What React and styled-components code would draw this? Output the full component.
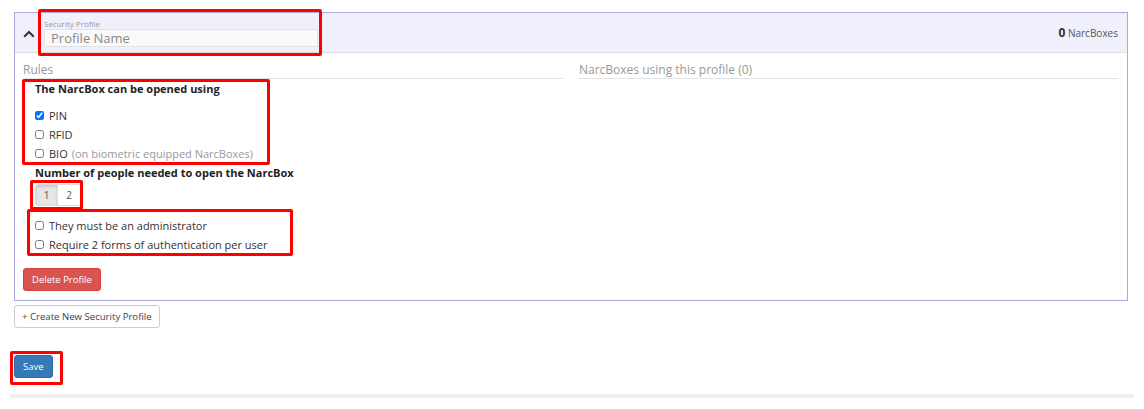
import React, { useState } from "react";
import styled, { createGlobalStyle } from "styled-components";

const GlobalStyle = createGlobalStyle`
    body{
        margin: 0;
        background: #FFFFFF;
        font-family: 'Open Sans', 'Liberation Sans', sans-serif;
        color: #333333;
    }
`;

export default function App() {
    const [people, setPeople] = useState(1);
    const [methods, setMethods] = useState({ pin: true, rfid: false, bio: false });

    return (
        <>
            <GlobalStyle />
            <Page>
                <Panel>
                    <PanelHeader>
                        <Chevron viewBox="0 0 12 8">
                            <path d="M1.2 6.8 L6 2 L10.8 6.8" fill="none" stroke="#333" strokeWidth="2" />
                        </Chevron>
                        <Field>
                            <small>Security Profile</small>
                            <input placeholder="Profile Name" />
                        </Field>
                        <Count><b>0</b> NarcBoxes</Count>
                    </PanelHeader>
                    <PanelBody>
                        <Column>
                            <ColumnTitle>Rules</ColumnTitle>
                            <Rules>
                                <RuleTitle>The NarcBox can be opened using</RuleTitle>
                                <CheckList top={8} bottom={1}>
                                    <Check>
                                        <input type="checkbox" checked={methods.pin} onChange={() => setMethods({ ...methods, pin: !methods.pin })} />
                                        PIN
                                    </Check>
                                    <Check>
                                        <input type="checkbox" checked={methods.rfid} onChange={() => setMethods({ ...methods, rfid: !methods.rfid })} />
                                        RFID
                                    </Check>
                                    <Check>
                                        <input type="checkbox" checked={methods.bio} onChange={() => setMethods({ ...methods, bio: !methods.bio })} />
                                        BIO <Muted>(on biometric equipped NarcBoxes)</Muted>
                                    </Check>
                                </CheckList>
                                <RuleTitle>Number of people needed to open the NarcBox</RuleTitle>
                                <ButtonGroup>
                                    <GroupButton active={people === 1} onClick={() => setPeople(1)}>1</GroupButton>
                                    <GroupButton active={people === 2} onClick={() => setPeople(2)}>2</GroupButton>
                                </ButtonGroup>
                                <CheckList top={10} bottom={0}>
                                    <Check><input type="checkbox" />They must be an administrator</Check>
                                    <Check><input type="checkbox" />Require 2 forms of authentication per user</Check>
                                </CheckList>
                            </Rules>
                            <DangerButton>Delete Profile</DangerButton>
                        </Column>
                        <Column>
                            <ColumnTitle>NarcBoxes using this profile (0)</ColumnTitle>
                        </Column>
                    </PanelBody>
                </Panel>
                <DefaultButton>+ Create New Security Profile</DefaultButton>
                <PrimaryButton>Save</PrimaryButton>
                <Footer />

                <Highlight style={{ left: 38, top: 9, width: 284, height: 47 }} />
                <Highlight style={{ left: 22, top: 79, width: 248, height: 86 }} />
                <Highlight style={{ left: 30, top: 180, width: 53, height: 30 }} />
                <Highlight style={{ left: 27, top: 209, width: 266, height: 47 }} />
                <Highlight style={{ left: 10, top: 351, width: 53, height: 34 }} />
            </Page>
        </>
    )
}

const Page = styled.div`
    position: relative;
    width: 1144px;
    height: 409px;
    box-sizing: border-box;
    padding: 12px 16px 0 14px;
    display: flex;
    flex-direction: column;
    align-items: flex-start;
`;
const Panel = styled.div`
    align-self: stretch;
    border: 1px solid #A9A9DD;
`;
const PanelHeader = styled.div`
    height: 39px;
    background: #F0F0FC;
    border-bottom: 1px solid #DDDDDD;
    display: flex;
    align-items: center;
    padding: 0 9px 0 7px;
`;
const Chevron = styled.svg`
    width: 12px;
    height: 8px;
    margin: 2px 9px 0 1px;
`;
const Field = styled.label`
    display: flex;
    flex-direction: column;
    margin-top: -1px;
    small{
        font-size: 8px;
        line-height: 11px;
        color: #999999;
    }
    input{
        width: 274px;
        height: 18px;
        box-sizing: border-box;
        border: 1px solid #E2E2E2;
        background: #F9F9F9;
        padding: 0 6px;
        font-family: 'Open Sans', sans-serif;
        font-size: 13px;
        outline: none;
        &::placeholder{
            color: #888888;
        }
    }
`;
const Count = styled.div`
    margin-left: auto;
    font-size: 10px;
    color: #555555;
    b{
        font-size: 12px;
        color: #333333;
    }
`;
const PanelBody = styled.div`
    display: grid;
    grid-template-columns: 540px 1fr;
    gap: 16px;
    padding: 9px 9px 9px 8px;
`;
const Column = styled.div`
    display: flex;
    flex-direction: column;
    align-items: flex-start;
`;
const ColumnTitle = styled.div`
    align-self: stretch;
    font-size: 12px;
    line-height: 16px;
    color: #999999;
    border-bottom: 1px solid #E2E2E2;
`;
const Rules = styled.div`
    padding: 1px 0 0 12px;
    display: flex;
    flex-direction: column;
    align-items: flex-start;
`;
const RuleTitle = styled.div`
    font-size: 11px;
    font-weight: 700;
    line-height: 18px;
    color: #222222;
`;
const CheckList = styled.div`
    display: flex;
    flex-direction: column;
    margin: ${props => props.top}px 0 ${props => props.bottom}px;
`;
const Check = styled.label`
    display: flex;
    align-items: center;
    height: 19px;
    font-size: 11px;
    color: #333333;
    input{
        width: 9px;
        height: 9px;
        margin: 0 5px 0 0;
    }
`;
const Muted = styled.span`
    color: #999999;
    margin-left: 4px;
`;
const ButtonGroup = styled.div`
    display: flex;
    margin-top: 2px;
`;
const GroupButton = styled.button`
    width: 23px;
    height: 22px;
    padding: 0;
    font-family: 'Open Sans', sans-serif;
    font-size: 10px;
    color: #555555;
    border: 1px solid #DDDDDD;
    background: ${props => props.active ? "#E6E6E6" : "#FFFFFF"};
    box-shadow: ${props => props.active ? "inset 0 2px 3px rgba(0,0,0,.12)" : "none"};
    &:first-child{ border-radius: 3px 0 0 3px; }
    &:last-child{ border-radius: 0 3px 3px 0; border-left: none; }
`;
const DangerButton = styled.button`
    margin-top: 14px;
    height: 23px;
    padding: 0 8px;
    border: 1px solid #D43F3A;
    border-radius: 3px;
    background: #D9534F;
    color: #FFFFFF;
    font-family: 'Open Sans', sans-serif;
    font-size: 9.5px;
`;
const DefaultButton = styled.button`
    margin-top: 4px;
    height: 23px;
    padding: 0 7px;
    border: 1px solid #CCCCCC;
    border-radius: 3px;
    background: #FFFFFF;
    color: #444444;
    font-family: 'Open Sans', sans-serif;
    font-size: 9.6px;
`;
const PrimaryButton = styled.button`
    margin-top: 27px;
    height: 23px;
    padding: 0 8px;
    border: 1px solid #2E6DA4;
    border-radius: 3px;
    background: #337AB7;
    color: #FFFFFF;
    font-family: 'Open Sans', sans-serif;
    font-size: 9.5px;
`;
const Footer = styled.div`
    align-self: stretch;
    margin: 16px -6px 0 -4px;
    height: 4px;
    background: #EEEEEE;
`;
const Highlight = styled.div`
    position: absolute;
    box-sizing: border-box;
    border: 3px solid #FF0000;
    border-radius: 2px;
    pointer-events: none;
`;
